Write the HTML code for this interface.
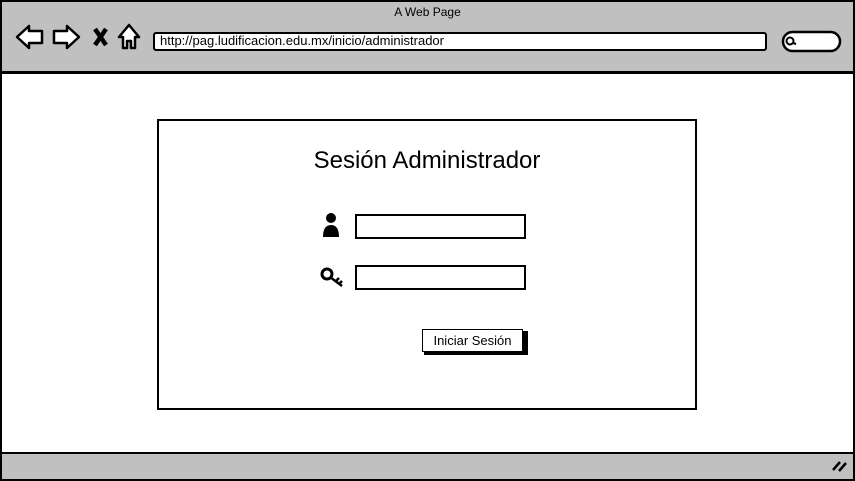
<!DOCTYPE html>
<html><head><meta charset="utf-8"><style>
*{margin:0;padding:0;box-sizing:border-box}
body{width:855px;height:481px;overflow:hidden;background:#fff;font-family:"Liberation Sans",sans-serif;position:relative}
.abs{position:absolute}
</style></head><body>
<div class="abs" style="left:0;top:0;width:855px;height:481px;border:2px solid #000;"></div>
<div class="abs" style="left:2px;top:2px;width:851px;height:72px;background:#c0c0c0;border-bottom:3px solid #000;"></div>
<div class="abs" style="left:0;top:5px;width:855px;text-align:center;font-size:12px;">A Web Page</div>
<svg class="abs" style="left:0;top:0" width="855" height="72">
<g fill="#fff" stroke="#000" stroke-width="2.5" stroke-linejoin="round">
<path d="M17 37 L29 26 L29 31 L42 31 L42 43 L29 43 L29 48 Z"/>
<path d="M79 37 L67 26 L67 31 L54 31 L54 43 L67 43 L67 48 Z"/>
<path d="M119 37 L129 25 L139 37 L135 37 L135 48 L131 48 L131 41 L127 41 L127 48 L123 48 L123 37 Z"/>
<rect x="783" y="32" width="57" height="19" rx="9.5"/>
</g>
<path d="M95 29 L106 45 M106 29 L95 45" stroke="#000" stroke-width="4.5"/>
<circle cx="790" cy="41" r="3.5" fill="none" stroke="#000" stroke-width="2"/>
<line x1="793" y1="43" x2="796" y2="44" stroke="#000" stroke-width="2"/>
<rect x="154" y="33" width="612" height="17" rx="2" fill="#fff" stroke="#000" stroke-width="2"/>
</svg>
<div class="abs" style="left:160px;top:33px;font-size:13px;">http://pag.ludificacion.edu.mx/inicio/administrador</div>
<div class="abs" style="left:2px;top:452px;width:851px;height:27px;background:#c0c0c0;border-top:2px solid #000;"></div>
<svg class="abs" style="left:830px;top:458px" width="20" height="16"><path d="M3 12 L10 4 M9 13 L16 5" stroke="#000" stroke-width="2.5"/></svg>
<div class="abs" style="left:157px;top:119px;width:540px;height:291px;border:2px solid #000;"></div>
<div class="abs" style="left:157px;top:147px;width:540px;text-align:center;font-size:24px;">Sesión Administrador</div>
<svg class="abs" style="left:318px;top:210px" width="34" height="82">
<circle cx="13" cy="8" r="5" fill="#000"/><path d="M5 27 Q5 15 13 15 Q21 15 21 27 Z" fill="#000"/>
<circle cx="9" cy="64" r="5" fill="none" stroke="#000" stroke-width="3"/>
<path d="M12 67 L24 76 M18 71 L21 68 M21 74 L24 71" stroke="#000" stroke-width="2.5"/>
</svg>
<div class="abs" style="left:355px;top:214px;width:171px;height:25px;border:2px solid #000;background:#fff"></div>
<div class="abs" style="left:355px;top:265px;width:171px;height:25px;border:2px solid #000;background:#fff"></div>
<div class="abs" style="left:424px;top:331px;width:104px;height:24px;background:#000"></div>
<div class="abs" style="left:422px;top:329px;width:101px;height:23px;border:1px solid #000;background:#fff;font-size:13px;text-align:center;line-height:21px;">Iniciar Sesión</div>
</body></html>
